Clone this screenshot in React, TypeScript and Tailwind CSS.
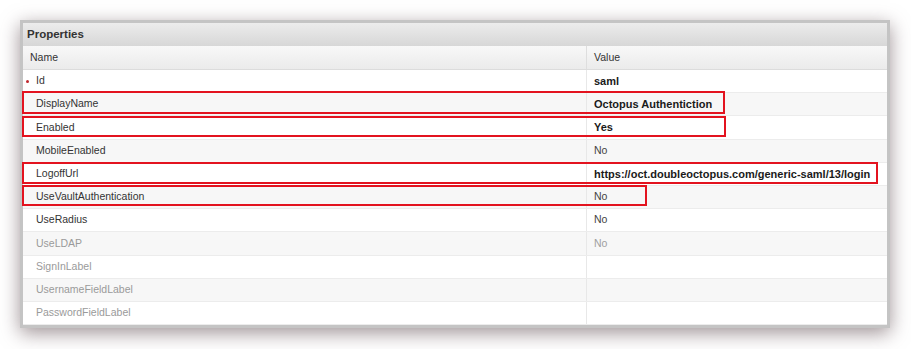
import React from "react";

type Row = {
  name: string;
  value?: string;
  bold?: boolean;
  muted?: boolean;
  required?: boolean;
};

const rows: Row[] = [
  { name: "Id", value: "saml", bold: true, required: true },
  { name: "DisplayName", value: "Octopus Authentiction", bold: true },
  { name: "Enabled", value: "Yes", bold: true },
  { name: "MobileEnabled", value: "No" },
  { name: "LogoffUrl", value: "https://oct.doubleoctopus.com/generic-saml/13/login", bold: true },
  { name: "UseVaultAuthentication", value: "No" },
  { name: "UseRadius", value: "No" },
  { name: "UseLDAP", value: "No", muted: true },
  { name: "SignInLabel", muted: true },
  { name: "UsernameFieldLabel", muted: true },
  { name: "PasswordFieldLabel", muted: true },
];

// red annotation boxes, coordinates relative to the panel's padding box
const marks = [
  { left: -1, top: 68, width: 703, height: 23 },
  { left: -1, top: 93, width: 704, height: 21 },
  { left: -1, top: 139, width: 856, height: 22 },
  { left: -1, top: 162, width: 625, height: 21 },
];

function PropertyRow({ row, index }: { row: Row; index: number }) {
  const bg = index % 2 === 1 ? "bg-[#f7f7f7]" : "bg-white";
  const nameColor = row.muted ? "text-[#9a9a9a]" : "text-[#333]";
  const valueColor = row.muted ? "text-[#a0a0a0]" : row.bold ? "text-[#1a1a1a]" : "text-[#444]";
  return (
    <div className={`flex h-[23.2px] border-b border-[#ececec] ${bg}`}>
      <div className={`relative flex w-[564px] items-center border-r border-[#e8e8e8] pl-[13px] ${nameColor}`}>
        {row.required && (
          <span className="absolute left-[3px] top-[10px] h-[3px] w-[3px] rounded-full bg-[#c0282d]" />
        )}
        {row.name}
      </div>
      <div
        className={`flex flex-1 items-center pl-[7px] ${valueColor} ${row.bold ? "text-[11px] font-bold" : ""}`}
      >
        {row.value}
      </div>
    </div>
  );
}

export default function App() {
  return (
    <div
      className="h-[349px] w-[911px] bg-white pl-[20px] pt-[20px]"
      style={{ fontFamily: '"Liberation Sans", Arial, sans-serif' }}
    >
      <div className="relative w-[870px] border-[3px] border-[#c4c4c4] bg-white text-[10.5px] shadow-[0_5px_18px_rgba(95,75,80,0.6)]">
        <div className="flex h-[23px] items-center bg-gradient-to-b from-[#ececec] to-[#d7d7d7] pl-[4px] text-[11.5px] font-bold text-[#333]">
          Properties
        </div>
        <div className="flex h-[24px] border-b border-[#dcdcdc] bg-gradient-to-b from-[#f8f8f8] to-[#ebebeb] text-[#333]">
          <div className="flex w-[564px] items-center border-r border-[#dedede] pl-[7px]">Name</div>
          <div className="flex flex-1 items-center pl-[7px]">Value</div>
        </div>
        {rows.map((r, i) => (
          <PropertyRow key={r.name} row={r} index={i} />
        ))}
        {marks.map((m, i) => (
          <div
            key={i}
            className="pointer-events-none absolute border-[2.5px] border-[#e3131f]"
            style={{ left: m.left, top: m.top, width: m.width, height: m.height }}
          />
        ))}
      </div>
    </div>
  );
}
